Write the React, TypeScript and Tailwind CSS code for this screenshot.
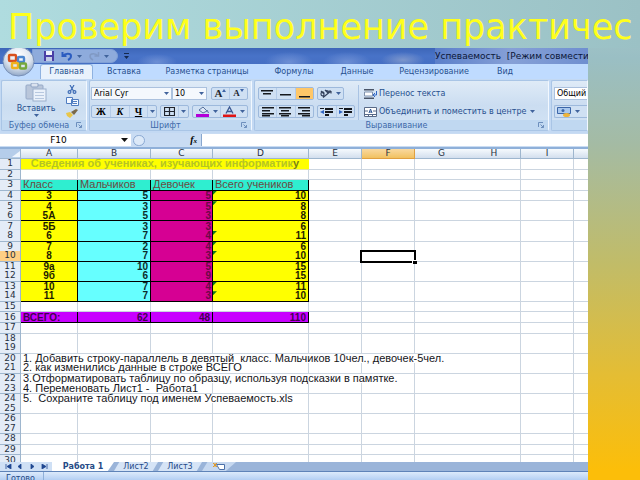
import React from "react";

const ui = "font-['DejaVu_Sans',sans-serif]";
const sheetFont = "font-['Liberation_Sans',Arial,sans-serif]";

/* ---------- small shared pieces ---------- */

function Caret({ className = "" }: { className?: string }) {
  return (
    <svg viewBox="0 0 5 3" className={`h-[3px] w-[5px] shrink-0 ${className}`} aria-hidden="true">
      <path d="M0 0h5L2.5 3z" fill="#41639c" />
    </svg>
  );
}

function IconButton({ label, className = "", children }: { label: string; className?: string; children: React.ReactNode }) {
  return (
    <button type="button" aria-label={label} className={`flex h-full items-center justify-center ${className}`}>
      {children}
    </button>
  );
}

function ButtonBox({ className = "", children }: { className?: string; children: React.ReactNode }) {
  return (
    <div className={`flex h-[13px] shrink-0 items-center divide-x divide-[#b4cbe8] rounded-[2px] border border-[#9db9dc] bg-[#cfe0f3] ${className}`}>
      {children}
    </div>
  );
}

function Group({ label, className = "", launcher = true, children }: { label: string; className?: string; launcher?: boolean; children: React.ReactNode }) {
  return (
    <section className={`flex flex-col rounded-[2px] border border-[#a9c5e6] border-r-[#f2f8ff] bg-linear-to-b from-[#dfebf7] via-[#cbddf1] to-[#d3e4f5] ${className}`}>
      <div className="flex min-h-0 flex-1">{children}</div>
      <div className="flex h-[10px] shrink-0 items-center bg-[#c0d8f1] pr-1 text-[8px] leading-[9px] text-[#3e6aaa]">
        <span className="flex-1 text-center whitespace-nowrap">{label}</span>
        {launcher && (
          <svg viewBox="0 0 6 6" className="h-[6px] w-[6px] shrink-0" fill="none" stroke="#6d8fbd" aria-hidden="true">
            <path d="M.5 5V.5H5M2.5 2.5l3 3M5.500 3v2.500H3" />
          </svg>
        )}
      </div>
    </section>
  );
}

function Lines({ rows, className = "" }: { rows: [number, number, number][]; className?: string }) {
  return (
    <svg viewBox="0 0 13 10" className={`h-[10px] w-[13px] ${className}`} aria-hidden="true">
      {rows.map(([x, y, w]) => (
        <rect key={y} x={x} y={y} width={w} height="1.500" fill="#15181d" />
      ))}
    </svg>
  );
}

/* ---------- window chrome ---------- */

function OfficeButton() {
  return (
    <button type="button" aria-label="Office" className="absolute top-0 left-[2px] z-10">
      <svg viewBox="0 0 34 29" className="h-[29px] w-[34px]">
        <defs>
          <radialGradient id="orb" cx=".5" cy=".3" r=".7">
            <stop offset="0" stopColor="#ffffff" />
            <stop offset=".6" stopColor="#dbe3ee" />
            <stop offset="1" stopColor="#8fa6c6" />
          </radialGradient>
        </defs>
        <ellipse cx="16.500" cy="13.500" rx="15.500" ry="14.500" fill="url(#orb)" stroke="#7890b8" />
        <g fill="none" strokeWidth="2.400">
          <rect x="7" y="7" width="7" height="6" rx="1" stroke="#d8501c" />
          <rect x="16" y="9" width="6" height="5" rx="1" stroke="#4b86cf" />
          <rect x="10" y="15" width="6" height="5" rx="1" stroke="#efb21c" />
          <rect x="18" y="15.500" width="6" height="5" rx="1" stroke="#76a83c" />
        </g>
      </svg>
    </button>
  );
}

function TitleBar() {
  return (
    <div className="flex h-4 items-center overflow-hidden bg-linear-to-b from-[#3d66b8] via-[#4873c8] to-[#456fc4]">
      <div className="ml-8 flex h-[14px] w-[86px] items-center rounded-r-full border border-[#7f9fd6] bg-[#8eabdc] pl-[10px]">
        <IconButton label="Сохранить">
          <svg viewBox="0 0 12 10" className="h-[10px] w-3">
            <path d="M1 0h10v10H1z" fill="#4a3fa6" />
            <path d="M3 0h6v4H3z" fill="#f1f4fb" />
            <path d="M3 6h6v4H3z" fill="#c3cbe6" />
          </svg>
        </IconButton>
        <IconButton label="Отменить" className="ml-[6px]">
          <svg viewBox="0 0 12 10" className="h-[10px] w-3" fill="none" stroke="#2b5cc0" strokeWidth="2">
            <path d="M1.500 1v4h4M2 5c2-3 8-3 8 0 0 2-1 3-3 4" />
          </svg>
        </IconButton>
        <Caret className="ml-1" />
        <IconButton label="Вернуть" className="ml-[6px]">
          <svg viewBox="0 0 12 10" className="h-[10px] w-3" fill="none" stroke="#8099c4" strokeWidth="1.500">
            <path d="M10.500 1v4h-4M10 5C8 2 2 2 2 5c0 2 1 3 3 4" />
          </svg>
        </IconButton>
        <Caret className="ml-1" />
      </div>
      <svg viewBox="0 0 5 6" className="ml-[6px] h-[6px] w-[5px] shrink-0" aria-hidden="true">
        <path d="M0 0h5v1H0zM0 3h5L2.500 6z" fill="#15294f" />
      </svg>
      <div className="ml-[6px] h-4 flex-1 bg-[radial-gradient(ellipse_20px_8px_at_22px_14px,#6d8fd4,transparent),radial-gradient(ellipse_24px_10px_at_154px_14px,#6d8fd4,transparent),radial-gradient(ellipse_24px_10px_at_212px_14px,#6d8fd4,transparent),radial-gradient(ellipse_22px_8px_at_268px_12px,#7c96cc,transparent)]" />
      <h2 className="h-4 w-[153px] shrink-0 bg-linear-to-r from-[#5b7fca] via-[#86a0d6] to-[#6f8fd0] text-[9px] leading-4 whitespace-pre text-[#0c1738]">{"Успеваемость  [Режим совмести"}</h2>
    </div>
  );
}

const ribbonTabs = [
  { name: "Вставка", width: "w-[62px]" },
  { name: "Разметка страницы", width: "w-[104px]" },
  { name: "Формулы", width: "w-[70px]" },
  { name: "Данные", width: "w-[56px]" },
  { name: "Рецензирование", width: "w-[98px]" },
  { name: "Вид", width: "w-[44px]" },
];

function RibbonTabs() {
  return (
    <nav className="flex h-[15px] items-stretch bg-[#bfdbff] pl-10 text-[8px] leading-[16px] text-[#27508f]">
      <button type="button" className="w-[53px] rounded-t-[3px] border border-b-0 border-[#8fb2e0] bg-[#e9f2fc] leading-[14px]">Главная</button>
      {ribbonTabs.map((t) => (
        <button key={t.name} type="button" className={`${t.width} text-center whitespace-nowrap`}>{t.name}</button>
      ))}
    </nav>
  );
}

function Clipboard() {
  return (
    <Group label="Буфер обмена" className="w-[86px] shrink-0">
      <button type="button" className="flex w-[56px] flex-col items-center pt-[2px] pl-[12px] text-[8px] leading-[9px] text-[#27508f]">
        <svg viewBox="0 0 22 19" className="h-[19px] w-[22px] shrink-0" aria-hidden="true">
          <rect x="1" y="2" width="17" height="14" rx="1" fill="#b9c6da" stroke="#96a9c7" />
          <rect x="6" y="0" width="7" height="4" rx="1" fill="#dbe3ef" stroke="#8da2c3" />
          <rect x="8" y="6" width="13" height="12" fill="#eaf1fa" stroke="#9bafcc" />
          <path d="M10 9.500h9M10 12.500h9M10 15.500h9" stroke="#b7c8df" />
        </svg>
        <span className="mt-[2px]">Вставить</span>
        <Caret className="mt-[1px]" />
      </button>
      <div className="flex flex-1 flex-col items-center justify-between pt-[2px]">
        <IconButton label="Вырезать">
          <svg viewBox="0 0 10 9" className="h-[9px] w-[10px]" fill="none" stroke="#3e6cb5" strokeWidth="1.200">
            <path d="M3 0l3.500 6M7 0L3.500 6" />
            <circle cx="2.500" cy="7" r="1.400" />
            <circle cx="7.500" cy="7" r="1.400" />
          </svg>
        </IconButton>
        <IconButton label="Копировать">
          <svg viewBox="0 0 13 9" className="h-[9px] w-[13px]" fill="#f5f9ff" stroke="#4f7cc0">
            <path d="M.5.500h6v6h-6zM5.500 2.500h7v6h-7z" />
            <path d="M7 4.500h4M7 6.500h4" />
          </svg>
        </IconButton>
        <IconButton label="Формат по образцу">
          <svg viewBox="0 0 12 9" className="h-[9px] w-3">
            <path d="M0 4l4-1 3 3-3 3-3-2z" fill="#e9c64a" />
            <path d="M5 3l5-3 2 1-4 5z" fill="#7b6a4a" />
          </svg>
        </IconButton>
      </div>
    </Group>
  );
}

function FontGroup() {
  return (
    <Group label="Шрифт" className="w-[163px] shrink-0">
      <div className="flex flex-1 flex-col gap-[5px] px-[1px] pt-[6px]">
        <div className="flex items-center">
          <div className="relative flex h-[13px] w-[81px] items-center">
            <select aria-label="Шрифт" className="h-full w-full appearance-none border border-[#abc1de] bg-[#f4f8fd] px-[2px] text-[8px] leading-[10px] text-black">
              <option>Arial Cyr</option>
            </select>
            <Caret className="absolute right-[3px]" />
          </div>
          <div className="relative flex h-[13px] w-[35px] items-center">
            <select aria-label="Размер шрифта" className="h-full w-full appearance-none border border-[#abc1de] bg-[#f4f8fd] px-[2px] text-[8px] leading-[10px] text-black">
              <option>10</option>
            </select>
            <Caret className="absolute right-[3px]" />
          </div>
          <ButtonBox className="ml-1 font-['Liberation_Serif',serif] font-bold text-[#23262e]">
            <button type="button" aria-label="Увеличить размер" className="flex w-[18px] justify-center text-[11px] leading-[11px]">
              A
              <svg viewBox="0 0 4 3" className="mt-[1px] h-[3px] w-1" aria-hidden="true"><path d="M0 3h4L2 0z" fill="#3f66a8" /></svg>
            </button>
            <button type="button" aria-label="Уменьшить размер" className="flex w-[17px] justify-center text-[9px] leading-[11px]">
              A
              <svg viewBox="0 0 4 3" className="mt-[1px] h-[3px] w-1" aria-hidden="true"><path d="M0 0h4L2 3z" fill="#3f66a8" /></svg>
            </button>
          </ButtonBox>
        </div>
        <div className="flex items-center gap-[3px]">
          <ButtonBox className="w-[66px] font-['Liberation_Serif',serif] text-[10px] leading-[11px] font-bold text-black">
            <button type="button" className="w-[19px]">Ж</button>
            <button type="button" className="w-[19px] italic">К</button>
            <button type="button" className="w-[18px] underline">Ч</button>
            <IconButton label="Подчеркивание" className="flex-1"><Caret /></IconButton>
          </ButtonBox>
          <ButtonBox className="w-[29px]">
            <IconButton label="Границы" className="w-[18px]">
              <svg viewBox="0 0 11 9" className="h-[9px] w-[11px]" fill="none" stroke="#20242c" strokeWidth="1.200">
                <path d="M.5.500h10v8H.5zM5.500.500v8M.5 4.500h10" />
              </svg>
            </IconButton>
            <IconButton label="Виды границ" className="flex-1"><Caret /></IconButton>
          </ButtonBox>
          <ButtonBox className="w-[56px]">
            <IconButton label="Цвет заливки" className="w-[28px] gap-1">
              <svg viewBox="0 0 13 11" className="h-[11px] w-[13px]">
                <path d="M3 4l4-3 4 4-4 2z" fill="#dce7f6" stroke="#56719c" />
                <path d="M11 4l1.500 3" stroke="#56719c" />
                <path d="M0 8h13v3H0z" fill="#b400d8" />
              </svg>
              <Caret />
            </IconButton>
            <IconButton label="Цвет текста" className="flex-1 gap-1">
              <svg viewBox="0 0 13 11" className="h-[11px] w-[13px]">
                <path d="M3 7.500L6.500 1 10 7.500M4.500 5.500h4" fill="none" stroke="#3a5791" strokeWidth="1.300" />
                <path d="M0 8.500h13V11H0z" fill="#e01414" />
              </svg>
              <Caret />
            </IconButton>
          </ButtonBox>
        </div>
      </div>
    </Group>
  );
}

function AlignGroup() {
  return (
    <Group label="Выравнивание" className="w-[295px] shrink-0">
      <div className="flex w-[103px] flex-col gap-[5px] pt-[6px] pl-[3px]">
        <div className="flex gap-[3px]">
          <ButtonBox className="w-[56px]">
            <IconButton label="По верхнему краю" className="flex-1"><Lines rows={[[0, 1, 12], [2, 4, 8]]} /></IconButton>
            <IconButton label="По середине" className="flex-1"><Lines rows={[[1, 5, 11]]} /></IconButton>
            <IconButton label="По нижнему краю" className="flex-1 bg-[#ffc768]"><Lines rows={[[1, 7, 11]]} /></IconButton>
          </ButtonBox>
          <ButtonBox className="w-[27px]">
            <IconButton label="Ориентация" className="flex-1 gap-1">
              <svg viewBox="0 0 12 9" className="h-[9px] w-3" fill="none" stroke="#33415c" strokeWidth="1.200">
                <path d="M1 2l3 3M1 5c0-3 3-3 3 0s-3 2-3 0M5 1l3 3c1-2-1-3-2-2M3 8.500L11 2M11 2v2.500M11 2H8.500" />
              </svg>
              <Caret />
            </IconButton>
          </ButtonBox>
        </div>
        <div className="flex gap-[3px]">
          <ButtonBox className="w-[56px]">
            <IconButton label="По левому краю" className="flex-1"><Lines rows={[[1, 0, 12], [1, 3, 8], [1, 6, 12], [1, 8, 8]]} /></IconButton>
            <IconButton label="По центру" className="flex-1"><Lines rows={[[0, 0, 12], [2, 3, 8], [0, 6, 12], [2, 8, 8]]} /></IconButton>
            <IconButton label="По правому краю" className="flex-1"><Lines rows={[[0, 0, 12], [4, 3, 8], [0, 6, 12], [4, 8, 8]]} /></IconButton>
          </ButtonBox>
          <ButtonBox className="w-[38px]">
            <IconButton label="Уменьшить отступ" className="flex-1">
              <svg viewBox="0 0 13 10" className="h-[10px] w-[13px]"><path d="M0 1h4v1H0zM5 1h8v2H5zM5 4h8v2H5zM5 7h4v2H5z" fill="#15181d" /><path d="M4 3v4L0 5z" fill="#3166c4" /></svg>
            </IconButton>
            <IconButton label="Увеличить отступ" className="flex-1">
              <svg viewBox="0 0 13 10" className="h-[10px] w-[13px]"><path d="M0 1h4v1H0zM5 1h8v2H5zM5 4h8v2H5zM5 7h4v2H5z" fill="#15181d" /><path d="M0 3v4l4-2z" fill="#3166c4" /></svg>
            </IconButton>
          </ButtonBox>
        </div>
      </div>
      <div className="mt-1 flex flex-1 flex-col gap-[5px] border-l border-[#a9c3e3] pt-[2px] pl-[5px] text-[8px] leading-[13px] text-[#27508f]">
        <button type="button" className="flex h-[13px] items-center gap-[2px] whitespace-nowrap">
          <svg viewBox="0 0 13 10" className="h-[10px] w-[13px] shrink-0"><path d="M0 0h10v1.500H0zM0 8.500h10V10H0z" fill="#4a5568" /><path d="M.5 3h8v4h-8z" fill="#fff" stroke="#8092ad" /><path d="M12.500 2v4H9.500M11 4L9 6l2 2" stroke="#3166c4" fill="none" /></svg>
          Перенос текста
        </button>
        <button type="button" className="flex h-[13px] items-center gap-[2px] whitespace-nowrap">
          <svg viewBox="0 0 13 10" className="h-[10px] w-[13px] shrink-0"><path d="M.5.500h12v9H.5z" fill="#fff" stroke="#596a87" /><path d="M0 7.500h13M4.500 7v3M8.500 7v3M1 4h3M12 4H9" stroke="#596a87" /><path d="M5 6l1.500-4L8 6M5.500 5h2" fill="none" stroke="#27508f" /></svg>
          Объединить и поместить в центре
          <Caret className="ml-[2px]" />
        </button>
      </div>
    </Group>
  );
}

function NumberGroup() {
  return (
    <Group label="" launcher={false} className="min-w-0 flex-1 rounded-r-none">
      <div className="flex flex-1 flex-col gap-[5px] pt-[6px] pl-[2px]">
        <select aria-label="Числовой формат" className="h-[13px] w-full appearance-none border border-r-0 border-[#abc1de] bg-white pl-[2px] text-[8px] leading-[10px] text-black">
          <option>Общий</option>
        </select>
        <ButtonBox className="rounded-r-none border-r-0">
          <IconButton label="Денежный формат" className="w-[26px] shrink-0 gap-1">
            <svg viewBox="0 0 14 10" className="h-[10px] w-[14px]"><path d="M.5.500h13v6H.5z" fill="#a9c8ee" stroke="#3c66a8" /><circle cx="6" cy="3.500" r="1.500" fill="#3c66a8" /><ellipse cx="9.500" cy="8" rx="3.500" ry="2" fill="#eeb43a" /></svg>
            <Caret />
          </IconButton>
        </ButtonBox>
      </div>
    </Group>
  );
}

function FormulaBar() {
  return (
    <div className="flex h-[16px] items-stretch border-b-2 border-[#8fb0d9] bg-[#c9dcf3] py-[1px] text-[8px] text-black">
      <div className="relative flex w-[131px] items-center bg-white">
        <input aria-label="Имя ячейки" defaultValue="F10" className="h-full w-[117px] bg-transparent text-center text-[9px] leading-3 outline-none" />
        <svg viewBox="0 0 7 4" className="absolute right-[3px] h-1 w-[7px]" aria-hidden="true"><path d="M0 0h7L3.500 4z" fill="#111" /></svg>
      </div>
      <div className="flex w-[71px] items-center justify-between border-r border-[#88a7cf] pr-1 pl-[2px]">
        <span className="h-[11px] w-3 rounded-full border border-[#8aa9d3] bg-[#dce9f8]" />
        <button type="button" className="font-['Liberation_Serif',serif] text-[10px] leading-3 font-bold italic">f<span className="text-[7px]">x</span></button>
      </div>
      <input aria-label="Строка формул" className="min-w-0 flex-1 bg-white outline-none" />
    </div>
  );
}

/* ---------- worksheet ---------- */

const columns = ["A", "B", "C", "D", "E", "F", "G", "H", "I", ""];
const colWidths = ["w-[57px]", "w-[73px]", "w-[62px]", "w-[96px]", "w-[53px]", "w-[53px]", "w-[53px]", "w-[53px]", "w-[53px]", ""];

const classes: [string, number, number, number, boolean][] = [
  ["3", 5, 5, 10, true],
  ["4", 3, 5, 8, true],
  ["5А", 5, 3, 8, false],
  ["5Б", 3, 3, 6, false],
  ["6", 7, 4, 11, true],
  ["7", 2, 4, 6, true],
  ["8", 7, 3, 10, true],
  ["9а", 10, 5, 15, false],
  ["9б", 6, 9, 15, false],
  ["10", 7, 4, 11, true],
  ["11", 7, 3, 10, true],
];

const notes: Record<number, { text: string; span: number }> = {
  20: { text: "1. Добавить строку-параллель в девятый  класс. Мальчиков 10чел., девочек-5чел.", span: 7 },
  21: { text: "2. как изменились данные в строке ВСЕГО", span: 4 },
  22: { text: "3.Отформатировать таблицу по образцу, используя подсказки в памятке.", span: 6 },
  23: { text: "4. Переменовать Лист1 -  Работа1", span: 3 },
  24: { text: "5.  Сохраните таблицу под именем Успеваемость.xls", span: 4 },
};

const ruledRows = new Set([1, 2, 3, 4, 6, 8, 10, 12, 14, 15, 16, 17, 19, 21, 23, 25, 27, 28, 29]);

function EmptyCells({ from, row }: { from: number; row: number }) {
  const rule = ruledRows.has(row) ? "border-b" : "";
  return (
    <>
      {columns.slice(from).map((name, i) => {
        const index = from + i;
        const side = index === 6 || index === 9 ? "" : "border-r";
        return (
          <td key={index} className={`relative border-[#cbd5e0] p-0 ${rule} ${side}`}>
            {name === "F" && row === 10 && (
              <span className="absolute -inset-x-[2px] -top-[1px] -bottom-[2px] z-10 border-2 border-black">
                <span className="absolute -right-[3px] -bottom-[3px] h-[4px] w-[5px] border-t border-l border-white bg-black" />
              </span>
            )}
          </td>
        );
      })}
    </>
  );
}

function RowCells({ row }: { row: number }) {
  const black = ruledRows.has(row) ? "border-b border-black" : "border-black";
  if (row === 1) {
    return (
      <>
        <td colSpan={4} className="border-b border-[#e3e39a] bg-[#ffff00] p-0 text-center text-[11px] font-bold text-[#b5c424]">
          Сведения об учениках, изучающих информатик<span className="text-[#77801a]">у</span>
        </td>
        <EmptyCells from={4} row={row} />
      </>
    );
  }
  if (row === 3) {
    return (
      <>
        {["Класс", "Мальчиков", "Девочек", "Всего учеников"].map((t) => (
          <td key={t} className="border-r border-b border-black bg-[#2feed0] py-0 pr-0 pl-[2px] text-[11px] text-[#6b4a42] shadow-[0_-1px_0_#000]">{t}</td>
        ))}
        <EmptyCells from={4} row={row} />
      </>
    );
  }
  if (row >= 4 && row <= 14) {
    const [name, boys, girls, total, flag] = classes[row - 4];
    return (
      <>
        <td className={`border-r bg-[#ffff00] p-0 text-center font-bold text-[#1d1d00] ${black}`}>{name}</td>
        <td className={`border-r bg-[#66ffff] py-0 pr-[2px] pl-0 text-right font-bold text-[#0b2b2b] ${black}`}>{boys}</td>
        <td className={`border-r bg-[#d60093] py-0 pr-[1px] pl-0 text-right font-bold text-[#6b0846] ${black}`}>{girls}</td>
        <td className={`relative border-r bg-[#ffff00] py-0 pr-[2px] pl-0 text-right font-bold text-[#1d1d00] ${black}`}>
          {flag && <span className="absolute top-0 left-0 size-1 bg-[#0c7a1c] [clip-path:polygon(0_0,100%_0,0_100%)]" />}
          {total}
        </td>
        <EmptyCells from={4} row={row} />
      </>
    );
  }
  if (row === 16) {
    return (
      <>
        {["ВСЕГО:", "62", "48", "110"].map((t, i) => (
          <td key={t} className={`border-r border-b border-black bg-[#c800ff] px-[2px] py-0 font-bold text-[#42004f] shadow-[0_-1px_0_#000] ${i ? "text-right" : "text-left"}`}>{t}</td>
        ))}
        <EmptyCells from={4} row={row} />
      </>
    );
  }
  const note = notes[row];
  if (note) {
    return (
      <>
        <td colSpan={note.span} className={`border-[#cbd5e0] py-0 pr-0 pl-[2px] text-[11px] text-[#15151a] ${note.span === 7 ? "" : "border-r"} ${ruledRows.has(row) ? "border-b" : ""}`}>
          <span className="whitespace-pre">{note.text}</span>
        </td>
        <EmptyCells from={note.span} row={row} />
      </>
    );
  }
  return <EmptyCells from={0} row={row} />;
}

function Sheet() {
  return (
    <div className="min-h-0 flex-1 overflow-hidden bg-white">
      <table className={`h-[316px] w-full table-fixed border-separate border-spacing-0 text-[10px] leading-[9px] whitespace-nowrap ${sheetFont}`}>
        <colgroup>
          <col className="w-[21px]" />
          {colWidths.map((w, i) => (
            <col key={i} className={w} />
          ))}
        </colgroup>
        <thead>
          <tr>
            <th className="border-r border-b border-[#9eb6ce] bg-[#b5cdea] p-0">
              <svg viewBox="0 0 8 6" className="ml-auto h-[6px] w-2" aria-hidden="true"><path d="M8 0v6H0z" fill="#eef5fd" /></svg>
            </th>
            {columns.map((c, i) => (
              <th
                key={i}
                scope="col"
                className={`border-b p-0 text-center text-[9px] font-normal text-[#27313f] ${ui} ${
                  c === "F" ? "border-r border-[#e0a040] bg-linear-to-b from-[#f9d99f] to-[#f1c15f]" : "border-[#9eb6ce] bg-linear-to-b from-[#f6fafd] to-[#d3dfee]"
                } ${i === 6 || i === 9 ? "" : "border-r"}`}
              >
                {c}
              </th>
            ))}
          </tr>
        </thead>
        <tbody>
          {Array.from({ length: 30 }, (_, i) => i + 1).map((row) => (
            <tr key={row}>
              <th
                scope="row"
                className={`border-r border-[#9eb6ce] p-0 text-center text-[9px] font-normal text-[#27313f] ${ui} ${ruledRows.has(row) ? "border-b" : ""} ${row === 10 ? "bg-[#ffcf85]" : "bg-[#e4ecf7]"}`}
              >
                {row}
              </th>
              <RowCells row={row} />
            </tr>
          ))}
        </tbody>
      </table>
    </div>
  );
}

function SheetTabs() {
  return (
    <div className="flex h-[10px] shrink-0 items-stretch overflow-hidden border-b border-[#5f83b8] bg-[#9ab4d9] text-[8px] leading-[9px] text-[#254a86]">
      <div className="flex w-[52px] items-center justify-around bg-[#cfe0f5] px-[2px]">
        {["M1 0v5M6 0v5L2 2.500z", "M4 0v5L1 2.500z", "M2 0v5l3-2.500z", "M6 0v5M1 0v5l4-2.500z"].map((d, i) => (
          <button key={d} type="button" aria-label={["Первый лист", "Предыдущий лист", "Следующий лист", "Последний лист"][i]}>
            <svg viewBox="0 0 7 5" className="h-[5px] w-[7px]"><path d={d} fill="#1f4690" stroke="#1f4690" strokeWidth=".8" /></svg>
          </button>
        ))}
      </div>
      <button type="button" className="w-[62px] bg-white font-bold [clip-path:polygon(0_0,100%_0,90%_100%,0_100%)]">Работа 1</button>
      <button type="button" className="w-[44px] bg-[#d6e4f6] [clip-path:polygon(12%_0,100%_0,88%_100%,0_100%)]">Лист2</button>
      <button type="button" className="w-[44px] bg-[#d6e4f6] [clip-path:polygon(12%_0,100%_0,88%_100%,0_100%)]">Лист3</button>
      <button type="button" aria-label="Вставить лист" className="flex w-[34px] items-center justify-center bg-[#c6d8f0] [clip-path:polygon(16%_0,100%_0,70%_100%,0_100%)]">
        <svg viewBox="0 0 12 8" className="h-2 w-3"><path d="M3.500 1.500h8v5h-5z" fill="#fff" stroke="#4a6fa8" /><path d="M0 0l4 4M4 0L0 4M2 0v4" stroke="#e09a28" /></svg>
      </button>
    </div>
  );
}

export default function App() {
  return (
    <main className={`flex h-screen flex-col overflow-hidden bg-[linear-gradient(to_bottom,#a9c9cb_0%,#9abfc4_12%,#a4bba4_30%,#c1bc68_55%,#e4bd34_78%,#fcbe09_98%)] ${ui}`}>
      <h1 className="h-12 shrink-0 bg-linear-to-r from-[#afdcdf] to-[#9bc1c5] pl-2 text-[35px] leading-[54px] whitespace-nowrap text-[#ffff1c]">
        Проверим выполнение практичес
      </h1>
      <div className="mr-[52px] flex min-h-0 flex-1 flex-col overflow-hidden bg-[#bfdbff]">
        <header className="relative shrink-0">
          <OfficeButton />
          <TitleBar />
          <RibbonTabs />
          <div className="flex h-[54px] gap-[2px] bg-[#c3d9f3] pt-[1px] pb-[2px] pl-[1px]">
            <Clipboard />
            <FontGroup />
            <AlignGroup />
            <NumberGroup />
          </div>
          <FormulaBar />
        </header>
        <Sheet />
        <SheetTabs />
        <footer className="h-2 shrink-0 overflow-hidden bg-linear-to-b from-[#dceafb] to-[#b4cff3] text-[8px] leading-[14px] text-[#254a86]">
          <span className="block h-full w-[44px] border-r border-[#8fb0d9] pl-[6px]">Готово</span>
        </footer>
      </div>
    </main>
  );
}
